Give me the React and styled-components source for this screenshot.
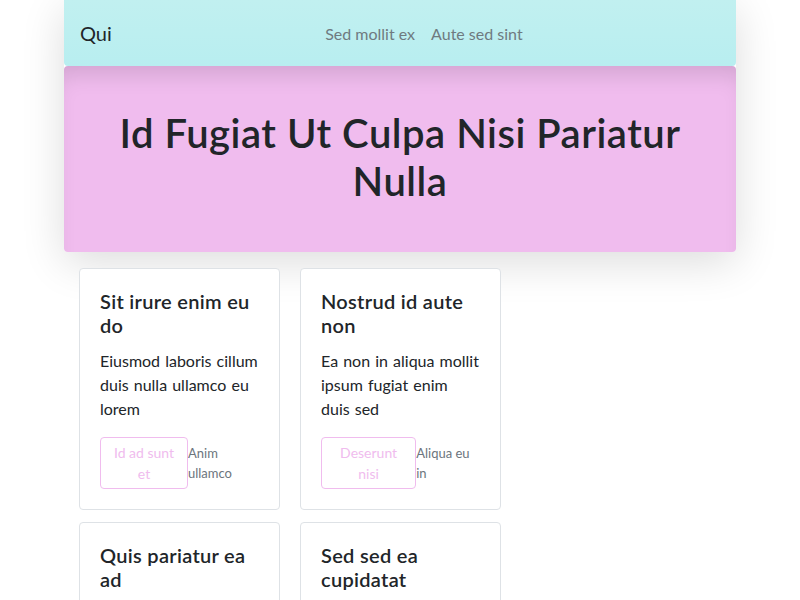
import React from 'react';
import styled, { createGlobalStyle } from 'styled-components';

const GlobalStyle = createGlobalStyle`
  * { box-sizing: border-box; }
  body {
    margin: 0;
    background: #fff;
    font-family: Lato, "Noto Sans", sans-serif;
    color: #212529;
  }
`;

// Outer page wrapper, centered column
const Page = styled.div`
  width: 672px;
  margin: 0 auto;
`;

// Top block: navbar plus hero, carries the big soft shadow
const Header = styled.header`
  box-shadow: 0 10px 44px rgba(0, 0, 0, 0.14);
  border-radius: 4px;
`;

const Navbar = styled.nav`
  height: 66px;
  display: flex;
  align-items: center;
  padding: 0 16px;
  background: linear-gradient(#c1f0f0, #b8eef0);
  border-radius: 0 0 4px 4px;
`;

const Brand = styled.a`
  font-size: 20px;
  color: #212529;
  margin-right: 16px;
  text-decoration: none;
`;

const NavLinks = styled.div`
  flex: 1;
  display: flex;
  justify-content: center;
`;

const NavLink = styled.a`
  padding: 8px;
  font-size: 16px;
  color: #6f7a80;
  text-decoration: none;
`;

const Hero = styled.section`
  padding: 43px 40px 47px;
  background: #f0bcee;
  border-radius: 4px;
  box-shadow: inset 0 18px 22px -10px rgba(0, 0, 0, 0.13);
`;

const Title = styled.h1`
  margin: 0;
  font-size: 40px;
  line-height: 48px;
  font-weight: 600;
  letter-spacing: 0.5px;
  text-align: center;
  color: #212529;
`;

const Content = styled.main`
  padding: 16px 15px 0;
  display: flex;
  flex-direction: column;
  gap: 12px;
`;

const CardRow = styled.div`
  display: grid;
  grid-template-columns: repeat(3, 201px);
  gap: 20px;
`;

const Card = styled.div`
  border: 1px solid #dee2e6;
  border-radius: 4px;
  padding: 20px;
  background: #fff;
`;

const CardTitle = styled.h5`
  margin: 0 0 12px;
  font-size: 20px;
  line-height: 24px;
  font-weight: 600;
  letter-spacing: 0.3px;
`;

const CardText = styled.p`
  margin: 0 0 16px;
  font-size: 16px;
  line-height: 24px;
  word-spacing: 1px;
`;

// Button and note share the row and shrink against each other
const Actions = styled.div`
  display: flex;
  align-items: flex-start;
`;

const OutlineButton = styled.button`
  padding: 4px 8px;
  font-family: inherit;
  font-size: 14px;
  line-height: 21px;
  color: #f0bcee;
  background: transparent;
  border: 1px solid #f0bcee;
  border-radius: 4px;
  text-align: center;
`;

const Muted = styled.small`
  font-size: 13px;
  line-height: 19.5px;
  color: #6c757d;
  padding-top: 7px;
`;

const cards = [
  [
    { title: 'Sit irure enim eu do', text: 'Eiusmod laboris cillum duis nulla ullamco eu lorem', btn: 'Id ad sunt et', note: 'Anim ullamco' },
    { title: 'Nostrud id aute non', text: 'Ea non in aliqua mollit ipsum fugiat enim duis sed', btn: 'Deserunt nisi', note: 'Aliqua eu in' },
  ],
  [
    { title: 'Quis pariatur ea ad', text: 'Tempor amet dolore velit ex labore', btn: 'Elit sint', note: 'Culpa non' },
    { title: 'Sed sed ea cupidatat', text: 'Irure nostrud magna officia aliqua', btn: 'Minim est', note: 'Duis ut' },
  ],
];

const App = () => (
  <>
    <GlobalStyle />
    <Page>
      <Header>
        <Navbar>
          <Brand href="#">Qui</Brand>
          <NavLinks>
            <NavLink href="#">Sed mollit ex</NavLink>
            <NavLink href="#">Aute sed sint</NavLink>
          </NavLinks>
        </Navbar>
        <Hero>
          <Title>Id Fugiat Ut Culpa Nisi Pariatur Nulla</Title>
        </Hero>
      </Header>
      <Content>
        {cards.map((row, i) => (
          <CardRow key={i}>
            {row.map((c) => (
              <Card key={c.title}>
                <CardTitle>{c.title}</CardTitle>
                <CardText>{c.text}</CardText>
                <Actions>
                  <OutlineButton>{c.btn}</OutlineButton>
                  <Muted>{c.note}</Muted>
                </Actions>
              </Card>
            ))}
          </CardRow>
        ))}
      </Content>
    </Page>
  </>
);

export default App;
